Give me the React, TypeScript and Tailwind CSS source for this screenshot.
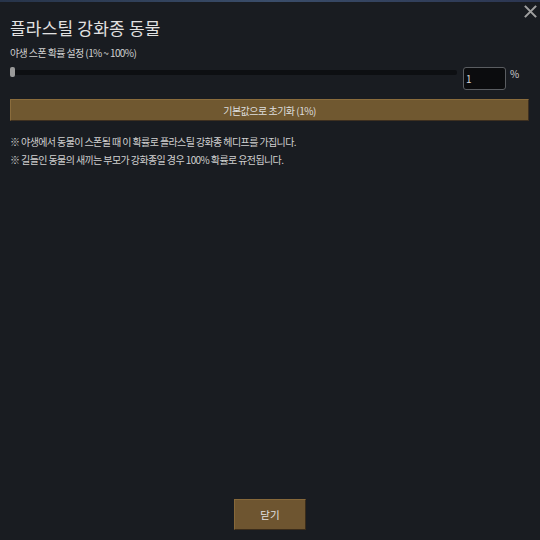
export default function App() {
  return (
    <div
      className="w-[540px] h-[540px] bg-[#191c21] flex flex-col relative overflow-hidden"
      style={{ fontFamily: '"Noto Sans CJK KR", "Noto Sans", sans-serif' }}
    >
      <div className="h-[2px] w-full bg-gradient-to-r from-[#27344a] via-[#3a4d6a] to-[#2b3550]" />
      <button className="absolute top-[3px] right-[2px] w-[16px] h-[16px] flex items-center justify-center text-[#a0a0a0]">
        <svg viewBox="0 0 16 16" width="15" height="15" fill="none" stroke="currentColor" strokeWidth="2.2">
          <path d="M2 2 L14 14 M14 2 L2 14" />
        </svg>
      </button>
      <div className="px-[10px] pt-[14px] flex flex-col flex-1">
        <h1 className="text-[17px] leading-[24px] text-[#e2e2e2] tracking-[0.2px]">플라스틸 강화종 동물</h1>
        <div className="mt-[6px] text-[10px] leading-[14px] text-[#d0d0d0] tracking-[-0.6px]">야생 스폰 확률 설정 (1% ~ 100%)</div>
        <div className="mt-[7px] flex items-start">
          <div className="relative flex-1 h-[5px] bg-[#0d0f12] rounded-[2px] mr-[6px] mt-[3px]">
            <div className="absolute left-0 top-[-3px] w-[5px] h-[10px] rounded-[2px] bg-[#9a9a9a]" />
          </div>
          <div className="w-[43px] h-[23px] border border-[#5a5d61] rounded-[3px] bg-[#0b0c0e] text-[10px] text-[#d8d8d8] flex items-center pl-[2px]">
            1
          </div>
          <div className="text-[10px] leading-[14px] text-[#cfcfcf] ml-[4px] w-[20px]">%</div>
        </div>
        <button className="mt-[9px] h-[22px] w-[519px] bg-[#705830] border border-[#3e3020] border-t-[#8a6c3c] border-l-[#8a6c3c] text-[10px] tracking-[-0.5px] text-[#dedede] flex items-center justify-center">
          기본값으로 초기화 (1%)
        </button>
        <div className="mt-[12px] text-[10px] leading-[18px] text-[#d0d0d0] tracking-[-0.6px]">
          <div>※ 야생에서 동물이 스폰될 때 이 확률로 플라스틸 강화종 헤디프를 가집니다.</div>
          <div>※ 길들인 동물의 새끼는 부모가 강화종일 경우 100% 확률로 유전됩니다.</div>
        </div>
        <div className="flex-1" />
        <div className="flex justify-center pb-[10px]">
          <button className="w-[72px] h-[31px] bg-[#6e5530] border border-[#3a2c1a] border-t-[#86683a] border-l-[#86683a] text-[10.5px] text-[#e0e0e0] flex items-center justify-center">
            닫기
          </button>
        </div>
      </div>
    </div>
  )
}
